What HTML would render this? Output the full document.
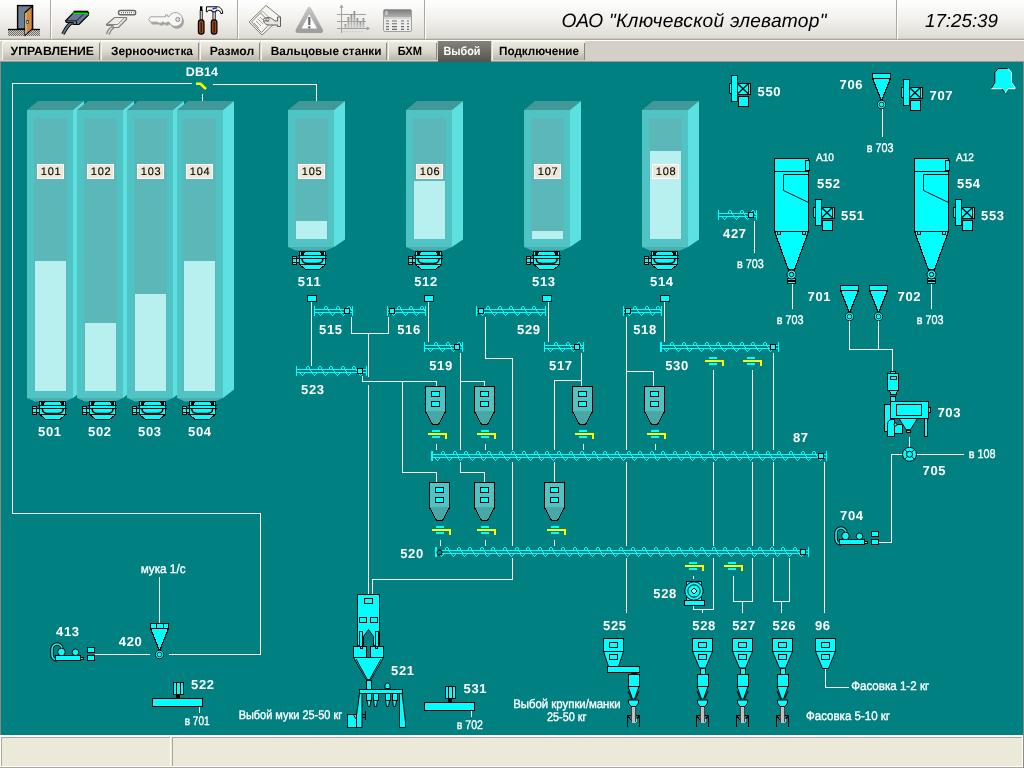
<!DOCTYPE html>
<html lang="ru"><head><meta charset="utf-8"><title>ОАО "Ключевской элеватор" - Выбой</title>
<style>
html,body{margin:0;padding:0;background:#008080;overflow:hidden}
body{width:1024px;height:768px;font-family:"Liberation Sans",sans-serif}
svg{display:block;position:absolute;left:0;top:0;will-change:transform}
text{font-family:"Liberation Sans",sans-serif;white-space:pre}
.b{fill:#fff;font-weight:bold}
.r{fill:#fff;stroke:#fff;stroke-width:.35px}
.k{fill:#000;stroke:#000;stroke-width:.12px}
</style></head><body>
<svg width="1024" height="768" viewBox="0 0 1024 768" shape-rendering="crispEdges" text-rendering="geometricPrecision">
<defs>
<linearGradient id="tbg" x1="0" y1="0" x2="0" y2="1"><stop offset="0" stop-color="#FFFFFF"/><stop offset=".5" stop-color="#F1F0EC"/><stop offset="1" stop-color="#DBD9D1"/></linearGradient>
<linearGradient id="tab" x1="0" y1="0" x2="0" y2="1"><stop offset="0" stop-color="#EEEDE3"/><stop offset=".55" stop-color="#DAD8CC"/><stop offset="1" stop-color="#B9B7AB"/></linearGradient>
<linearGradient id="tsel" x1="0" y1="0" x2="0" y2="1"><stop offset="0" stop-color="#84847C"/><stop offset="1" stop-color="#55554F"/></linearGradient>
<pattern id="dith" width="2" height="2" patternUnits="userSpaceOnUse"><rect width="2" height="2" fill="#C8C8C8"/><rect width="1" height="1" fill="#707070"/><rect x="1" y="1" width="1" height="1" fill="#707070"/></pattern>
<g id="fl" fill="#00FFFF"><rect x="0" y="6" width="1" height="2"/><rect x="1" y="8" width="1" height="1"/><rect x="2" y="9" width="1" height="1"/><rect x="3" y="8" width="1" height="1"/><rect x="4" y="7" width="1" height="1"/><rect x="6" y="1" width="1" height="2"/><rect x="7" y="0" width="2" height="1"/><rect x="9" y="1" width="1" height="2"/><rect x="10" y="3" width="1" height="2"/><rect x="11" y="5" width="1" height="1"/></g><g id="flh" fill="#00FFFF"><rect x="0" y="6" width="1" height="2"/><rect x="1" y="8" width="1" height="1"/><rect x="2" y="9" width="1" height="1"/><rect x="3" y="8" width="1" height="1"/><rect x="4" y="7" width="1" height="1"/></g>
<linearGradient id="wg" x1="0" y1="0" x2="0" y2="1"><stop offset="0" stop-color="#C4C4C4"/><stop offset="1" stop-color="#9E9E9E"/></linearGradient>
<linearGradient id="bg" x1="0" y1="0" x2="0" y2="1"><stop offset="0" stop-color="#8C8C8C"/><stop offset="1" stop-color="#C8C8C8"/></linearGradient>
<linearGradient id="hg" x1="0" y1="0" x2="0" y2="1"><stop offset="0" stop-color="#7E7E7E"/><stop offset="1" stop-color="#B4B4B4"/></linearGradient>
</defs>
<rect x="0" y="0" width="1024" height="768" fill="#008080"/>
<rect x="12" y="83" width="180" height="1" fill="#fff"/>
<rect x="213" y="84" width="104" height="1" fill="#fff"/>
<rect x="316" y="84" width="1" height="17" fill="#fff"/>
<rect x="12" y="83" width="1" height="431" fill="#fff"/>
<rect x="12" y="513" width="249" height="1" fill="#fff"/>
<rect x="260" y="513" width="1" height="142" fill="#fff"/>
<rect x="169" y="654" width="92" height="1" fill="#fff"/>
<rect x="95" y="654" width="55" height="1" fill="#fff"/>
<rect x="202" y="94" width="1" height="7" fill="#fff"/>
<path d="M196,83.7 h4.500 l5.500,5.300" fill="none" stroke="#FFFF00" stroke-width="2.600" shape-rendering="auto"/>
<rect x="159" y="577" width="1" height="46" fill="#fff"/>
<rect x="311" y="302" width="1" height="64" fill="#fff"/>
<rect x="428" y="302" width="1" height="40" fill="#fff"/>
<rect x="548" y="302" width="1" height="40" fill="#fff"/>
<rect x="664" y="302" width="1" height="40" fill="#fff"/>
<rect x="351" y="317" width="1" height="17" fill="#fff"/>
<rect x="388" y="317" width="1" height="17" fill="#fff"/>
<rect x="351" y="333" width="38" height="1" fill="#fff"/>
<rect x="368" y="333" width="1" height="44" fill="#fff"/>
<rect x="368" y="385" width="1" height="209" fill="#fff"/>
<rect x="362" y="376" width="1" height="6" fill="#fff"/>
<rect x="362" y="381" width="75" height="1" fill="#fff"/>
<rect x="436" y="381" width="1" height="6" fill="#fff"/>
<rect x="402" y="381" width="1" height="92" fill="#fff"/>
<rect x="402" y="472" width="35" height="1" fill="#fff"/>
<rect x="436" y="472" width="1" height="11" fill="#fff"/>
<rect x="460" y="353" width="1" height="97" fill="#fff"/>
<rect x="460" y="462" width="1" height="11" fill="#fff"/>
<rect x="460" y="381" width="25" height="1" fill="#fff"/>
<rect x="484" y="381" width="1" height="6" fill="#fff"/>
<rect x="460" y="472" width="25" height="1" fill="#fff"/>
<rect x="484" y="472" width="1" height="11" fill="#fff"/>
<rect x="485" y="317" width="1" height="42" fill="#fff"/>
<rect x="485" y="358" width="28" height="1" fill="#fff"/>
<rect x="512" y="358" width="1" height="92" fill="#fff"/>
<rect x="512" y="462" width="1" height="84" fill="#fff"/>
<rect x="512" y="558" width="1" height="22" fill="#fff"/>
<rect x="372" y="579" width="141" height="1" fill="#fff"/>
<rect x="372" y="579" width="1" height="15" fill="#fff"/>
<rect x="581" y="353" width="1" height="34" fill="#fff"/>
<rect x="554" y="380" width="28" height="1" fill="#fff"/>
<rect x="554" y="380" width="1" height="70" fill="#fff"/>
<rect x="554" y="462" width="1" height="21" fill="#fff"/>
<rect x="626" y="317" width="1" height="133" fill="#fff"/>
<rect x="626" y="462" width="1" height="84" fill="#fff"/>
<rect x="626" y="558" width="1" height="55" fill="#fff"/>
<rect x="626" y="371" width="28" height="1" fill="#fff"/>
<rect x="653" y="371" width="1" height="16" fill="#fff"/>
<rect x="713" y="370" width="1" height="80" fill="#fff"/>
<rect x="713" y="462" width="1" height="84" fill="#fff"/>
<rect x="713" y="558" width="1" height="52" fill="#fff"/>
<rect x="752" y="370" width="1" height="80" fill="#fff"/>
<rect x="752" y="462" width="1" height="84" fill="#fff"/>
<rect x="752" y="558" width="1" height="44" fill="#fff"/>
<rect x="773" y="353" width="1" height="97" fill="#fff"/>
<rect x="773" y="462" width="1" height="84" fill="#fff"/>
<rect x="773" y="558" width="1" height="44" fill="#fff"/>
<rect x="824" y="462" width="1" height="151" fill="#fff"/>
<rect x="789" y="558" width="1" height="44" fill="#fff"/>
<rect x="773" y="601" width="17" height="1" fill="#fff"/>
<rect x="781" y="601" width="1" height="12" fill="#fff"/>
<rect x="733" y="576" width="1" height="26" fill="#fff"/>
<rect x="733" y="601" width="20" height="1" fill="#fff"/>
<rect x="742" y="601" width="1" height="12" fill="#fff"/>
<rect x="693" y="576" width="1" height="3" fill="#fff"/>
<rect x="693" y="605" width="1" height="5" fill="#fff"/>
<rect x="693" y="609" width="21" height="1" fill="#fff"/>
<rect x="702" y="609" width="1" height="4" fill="#fff"/>
<rect x="436" y="444" width="1" height="6" fill="#fff"/>
<rect x="485" y="444" width="1" height="6" fill="#fff"/>
<rect x="583" y="444" width="1" height="6" fill="#fff"/>
<rect x="655" y="444" width="1" height="6" fill="#fff"/>
<rect x="440" y="540" width="1" height="6" fill="#fff"/>
<rect x="485" y="540" width="1" height="6" fill="#fff"/>
<rect x="554" y="540" width="1" height="6" fill="#fff"/>
<rect x="754" y="221" width="1" height="32" fill="#fff"/>
<rect x="882" y="108" width="1" height="29" fill="#fff"/>
<rect x="792" y="284" width="1" height="25" fill="#fff"/>
<rect x="931" y="284" width="1" height="25" fill="#fff"/>
<rect x="849" y="320" width="1" height="30" fill="#fff"/>
<rect x="878" y="320" width="1" height="30" fill="#fff"/>
<rect x="849" y="349" width="44" height="1" fill="#fff"/>
<rect x="892" y="349" width="1" height="23" fill="#fff"/>
<rect x="909" y="437" width="1" height="10" fill="#fff"/>
<rect x="916" y="454" width="48" height="1" fill="#fff"/>
<rect x="891" y="454" width="12" height="1" fill="#fff"/>
<rect x="891" y="454" width="1" height="89" fill="#fff"/>
<rect x="879" y="542" width="13" height="1" fill="#fff"/>
<rect x="199" y="707" width="1" height="6" fill="#fff"/>
<rect x="471" y="711" width="1" height="6" fill="#fff"/>
<rect x="825" y="668" width="1" height="20" fill="#fff"/>
<rect x="825" y="687" width="24" height="1" fill="#fff"/>
<polygon points="27,110 38,101 84,101 73,110" fill="#409898" shape-rendering="auto"/>
<polygon points="73,110 84,101 84,389.4 73,398" fill="#5CE0E0" shape-rendering="auto"/>
<rect x="27" y="110" width="46" height="288" fill="#50C4C4"/>
<polygon points="27,398 73,398 65,401.4 35,401.4" fill="#48B0B0" shape-rendering="auto"/>
<rect x="34" y="118" width="33" height="273" fill="#5CB8B8"/>
<rect x="35" y="261" width="31" height="130" fill="#B8F0F0"/>
<rect x="37" y="164" width="27" height="15" fill="#fff"/>
<rect x="38" y="165" width="25" height="13" fill="#ECE9D8"/>
<text x="50.7" y="175.4" class="k" font-size="11" text-anchor="middle" textLength="20" lengthAdjust="spacing">101</text>
<polygon points="77,110 88,101 134,101 123,110" fill="#409898" shape-rendering="auto"/>
<polygon points="123,110 134,101 134,389.4 123,398" fill="#5CE0E0" shape-rendering="auto"/>
<rect x="77" y="110" width="46" height="288" fill="#50C4C4"/>
<polygon points="77,398 123,398 115,401.4 85,401.4" fill="#48B0B0" shape-rendering="auto"/>
<rect x="84" y="118" width="33" height="273" fill="#5CB8B8"/>
<rect x="85" y="323" width="31" height="68" fill="#B8F0F0"/>
<rect x="87" y="164" width="27" height="15" fill="#fff"/>
<rect x="88" y="165" width="25" height="13" fill="#ECE9D8"/>
<text x="100.7" y="175.4" class="k" font-size="11" text-anchor="middle" textLength="20" lengthAdjust="spacing">102</text>
<polygon points="127,110 138,101 184,101 173,110" fill="#409898" shape-rendering="auto"/>
<polygon points="173,110 184,101 184,389.4 173,398" fill="#5CE0E0" shape-rendering="auto"/>
<rect x="127" y="110" width="46" height="288" fill="#50C4C4"/>
<polygon points="127,398 173,398 165,401.4 135,401.4" fill="#48B0B0" shape-rendering="auto"/>
<rect x="134" y="118" width="33" height="273" fill="#5CB8B8"/>
<rect x="135" y="294" width="31" height="97" fill="#B8F0F0"/>
<rect x="137" y="164" width="27" height="15" fill="#fff"/>
<rect x="138" y="165" width="25" height="13" fill="#ECE9D8"/>
<text x="150.7" y="175.4" class="k" font-size="11" text-anchor="middle" textLength="20" lengthAdjust="spacing">103</text>
<polygon points="177,110 188,101 234,101 223,110" fill="#409898" shape-rendering="auto"/>
<polygon points="223,110 234,101 234,389.4 223,398" fill="#5CE0E0" shape-rendering="auto"/>
<rect x="177" y="110" width="46" height="288" fill="#50C4C4"/>
<polygon points="177,398 223,398 215,401.4 185,401.4" fill="#48B0B0" shape-rendering="auto"/>
<rect x="183" y="118" width="33" height="273" fill="#5CB8B8"/>
<rect x="184" y="261" width="31" height="130" fill="#B8F0F0"/>
<rect x="186" y="164" width="27" height="15" fill="#fff"/>
<rect x="187" y="165" width="25" height="13" fill="#ECE9D8"/>
<text x="199.7" y="175.4" class="k" font-size="11" text-anchor="middle" textLength="20" lengthAdjust="spacing">104</text>
<polygon points="288,110 299,101 345,101 334,110" fill="#409898" shape-rendering="auto"/>
<polygon points="334,110 345,101 345,239.5 334,247" fill="#5CE0E0" shape-rendering="auto"/>
<rect x="288" y="110" width="46" height="137" fill="#50C4C4"/>
<polygon points="288,247 334,247 326,250.4 296,250.4" fill="#48B0B0" shape-rendering="auto"/>
<rect x="295" y="118" width="33" height="121" fill="#5CB8B8"/>
<rect x="296" y="221" width="31" height="18" fill="#B8F0F0"/>
<rect x="298" y="164" width="27" height="15" fill="#fff"/>
<rect x="299" y="165" width="25" height="13" fill="#ECE9D8"/>
<text x="311.7" y="175.4" class="k" font-size="11" text-anchor="middle" textLength="20" lengthAdjust="spacing">105</text>
<polygon points="406,110 417,101 463,101 452,110" fill="#409898" shape-rendering="auto"/>
<polygon points="452,110 463,101 463,239.5 452,247" fill="#5CE0E0" shape-rendering="auto"/>
<rect x="406" y="110" width="46" height="137" fill="#50C4C4"/>
<polygon points="406,247 452,247 444,250.4 414,250.4" fill="#48B0B0" shape-rendering="auto"/>
<rect x="413" y="118" width="33" height="121" fill="#5CB8B8"/>
<rect x="414" y="181" width="31" height="58" fill="#B8F0F0"/>
<rect x="416" y="164" width="27" height="15" fill="#fff"/>
<rect x="417" y="165" width="25" height="13" fill="#ECE9D8"/>
<text x="429.7" y="175.4" class="k" font-size="11" text-anchor="middle" textLength="20" lengthAdjust="spacing">106</text>
<polygon points="524,110 535,101 581,101 570,110" fill="#409898" shape-rendering="auto"/>
<polygon points="570,110 581,101 581,239.5 570,247" fill="#5CE0E0" shape-rendering="auto"/>
<rect x="524" y="110" width="46" height="137" fill="#50C4C4"/>
<polygon points="524,247 570,247 562,250.4 532,250.4" fill="#48B0B0" shape-rendering="auto"/>
<rect x="531" y="118" width="33" height="121" fill="#5CB8B8"/>
<rect x="532" y="231" width="31" height="8" fill="#B8F0F0"/>
<rect x="534" y="164" width="27" height="15" fill="#fff"/>
<rect x="535" y="165" width="25" height="13" fill="#ECE9D8"/>
<text x="547.7" y="175.4" class="k" font-size="11" text-anchor="middle" textLength="20" lengthAdjust="spacing">107</text>
<polygon points="642,110 653,101 699,101 688,110" fill="#409898" shape-rendering="auto"/>
<polygon points="688,110 699,101 699,239.5 688,247" fill="#5CE0E0" shape-rendering="auto"/>
<rect x="642" y="110" width="46" height="137" fill="#50C4C4"/>
<polygon points="642,247 688,247 680,250.4 650,250.4" fill="#48B0B0" shape-rendering="auto"/>
<rect x="649" y="118" width="33" height="121" fill="#5CB8B8"/>
<rect x="650" y="151" width="31" height="88" fill="#B8F0F0"/>
<rect x="652" y="164" width="27" height="15" fill="#fff"/>
<rect x="653" y="165" width="25" height="13" fill="#ECE9D8"/>
<text x="665.7" y="175.4" class="k" font-size="11" text-anchor="middle" textLength="20" lengthAdjust="spacing">108</text>
<polygon points="39.8,414.5 65.8,414.5 59.8,419.5 45.8,419.5" fill="#00FFFF" stroke="#000" stroke-width="1" />
<rect x="39.3" y="401" width="27" height="14" fill="#000"/>
<rect x="40.3" y="402" width="25" height="12" fill="#00FFFF"/>
<rect x="41.3" y="402" width="3" height="3" fill="#000"/>
<rect x="61.3" y="402" width="3" height="3" fill="#000"/>
<rect x="44.3" y="402" width="1" height="1" fill="#000"/>
<rect x="60.3" y="402" width="1" height="1" fill="#000"/>
<rect x="38.3" y="405" width="29" height="1" fill="#000"/>
<rect x="38.3" y="408" width="29" height="1" fill="#000"/>
<path d="M42.3,409 c.3,3 2.300,4.500 5.500,4.500 h10 c3.200,0 5.200,-1.500 5.500,-4.500" fill="none" stroke="#000" stroke-width="1.500" shape-rendering="auto"/>
<rect x="42.3" y="411" width="1" height="1" fill="#000"/>
<rect x="62.3" y="411" width="1" height="1" fill="#000"/>
<rect x="36.3" y="408" width="4" height="5" fill="#000"/>
<rect x="37.3" y="409" width="2" height="3" fill="#00FFFF"/>
<rect x="32.3" y="406" width="5" height="9" fill="#000"/>
<rect x="33.3" y="407" width="3" height="7" fill="#00FFFF"/>
<rect x="33.3" y="408" width="3" height="1" fill="#000"/>
<rect x="33.3" y="412" width="3" height="1" fill="#000"/>
<polygon points="89.6,414.5 115.6,414.5 109.6,419.5 95.6,419.5" fill="#00FFFF" stroke="#000" stroke-width="1" />
<rect x="89.1" y="401" width="27" height="14" fill="#000"/>
<rect x="90.1" y="402" width="25" height="12" fill="#00FFFF"/>
<rect x="91.1" y="402" width="3" height="3" fill="#000"/>
<rect x="111.1" y="402" width="3" height="3" fill="#000"/>
<rect x="94.1" y="402" width="1" height="1" fill="#000"/>
<rect x="110.1" y="402" width="1" height="1" fill="#000"/>
<rect x="88.1" y="405" width="29" height="1" fill="#000"/>
<rect x="88.1" y="408" width="29" height="1" fill="#000"/>
<path d="M92.1,409 c.3,3 2.300,4.500 5.500,4.500 h10 c3.200,0 5.200,-1.500 5.500,-4.500" fill="none" stroke="#000" stroke-width="1.500" shape-rendering="auto"/>
<rect x="92.1" y="411" width="1" height="1" fill="#000"/>
<rect x="112.1" y="411" width="1" height="1" fill="#000"/>
<rect x="86.1" y="408" width="4" height="5" fill="#000"/>
<rect x="87.1" y="409" width="2" height="3" fill="#00FFFF"/>
<rect x="82.1" y="406" width="5" height="9" fill="#000"/>
<rect x="83.1" y="407" width="3" height="7" fill="#00FFFF"/>
<rect x="83.1" y="408" width="3" height="1" fill="#000"/>
<rect x="83.1" y="412" width="3" height="1" fill="#000"/>
<polygon points="139.4,414.5 165.4,414.5 159.4,419.5 145.4,419.5" fill="#00FFFF" stroke="#000" stroke-width="1" />
<rect x="138.9" y="401" width="27" height="14" fill="#000"/>
<rect x="139.9" y="402" width="25" height="12" fill="#00FFFF"/>
<rect x="140.9" y="402" width="3" height="3" fill="#000"/>
<rect x="160.9" y="402" width="3" height="3" fill="#000"/>
<rect x="143.9" y="402" width="1" height="1" fill="#000"/>
<rect x="159.9" y="402" width="1" height="1" fill="#000"/>
<rect x="137.9" y="405" width="29" height="1" fill="#000"/>
<rect x="137.9" y="408" width="29" height="1" fill="#000"/>
<path d="M141.9,409 c.3,3 2.300,4.500 5.500,4.500 h10 c3.200,0 5.200,-1.500 5.500,-4.500" fill="none" stroke="#000" stroke-width="1.500" shape-rendering="auto"/>
<rect x="141.9" y="411" width="1" height="1" fill="#000"/>
<rect x="161.9" y="411" width="1" height="1" fill="#000"/>
<rect x="135.9" y="408" width="4" height="5" fill="#000"/>
<rect x="136.9" y="409" width="2" height="3" fill="#00FFFF"/>
<rect x="131.9" y="406" width="5" height="9" fill="#000"/>
<rect x="132.9" y="407" width="3" height="7" fill="#00FFFF"/>
<rect x="132.9" y="408" width="3" height="1" fill="#000"/>
<rect x="132.9" y="412" width="3" height="1" fill="#000"/>
<polygon points="189.2,414.5 215.2,414.5 209.2,419.5 195.2,419.5" fill="#00FFFF" stroke="#000" stroke-width="1" />
<rect x="188.7" y="401" width="27" height="14" fill="#000"/>
<rect x="189.7" y="402" width="25" height="12" fill="#00FFFF"/>
<rect x="190.7" y="402" width="3" height="3" fill="#000"/>
<rect x="210.7" y="402" width="3" height="3" fill="#000"/>
<rect x="193.7" y="402" width="1" height="1" fill="#000"/>
<rect x="209.7" y="402" width="1" height="1" fill="#000"/>
<rect x="187.7" y="405" width="29" height="1" fill="#000"/>
<rect x="187.7" y="408" width="29" height="1" fill="#000"/>
<path d="M191.7,409 c.3,3 2.300,4.500 5.500,4.500 h10 c3.200,0 5.200,-1.500 5.500,-4.500" fill="none" stroke="#000" stroke-width="1.500" shape-rendering="auto"/>
<rect x="191.7" y="411" width="1" height="1" fill="#000"/>
<rect x="211.7" y="411" width="1" height="1" fill="#000"/>
<rect x="185.7" y="408" width="4" height="5" fill="#000"/>
<rect x="186.7" y="409" width="2" height="3" fill="#00FFFF"/>
<rect x="181.7" y="406" width="5" height="9" fill="#000"/>
<rect x="182.7" y="407" width="3" height="7" fill="#00FFFF"/>
<rect x="182.7" y="408" width="3" height="1" fill="#000"/>
<rect x="182.7" y="412" width="3" height="1" fill="#000"/>
<polygon points="299.5,264.5 325.5,264.5 319.5,269.5 305.5,269.5" fill="#00FFFF" stroke="#000" stroke-width="1" />
<rect x="299" y="251" width="27" height="14" fill="#000"/>
<rect x="300" y="252" width="25" height="12" fill="#00FFFF"/>
<rect x="301" y="252" width="3" height="3" fill="#000"/>
<rect x="321" y="252" width="3" height="3" fill="#000"/>
<rect x="304" y="252" width="1" height="1" fill="#000"/>
<rect x="320" y="252" width="1" height="1" fill="#000"/>
<rect x="298" y="255" width="29" height="1" fill="#000"/>
<rect x="298" y="258" width="29" height="1" fill="#000"/>
<path d="M302,259 c.3,3 2.300,4.500 5.500,4.500 h10 c3.200,0 5.200,-1.500 5.500,-4.500" fill="none" stroke="#000" stroke-width="1.500" shape-rendering="auto"/>
<rect x="302" y="261" width="1" height="1" fill="#000"/>
<rect x="322" y="261" width="1" height="1" fill="#000"/>
<rect x="296" y="258" width="4" height="5" fill="#000"/>
<rect x="297" y="259" width="2" height="3" fill="#00FFFF"/>
<rect x="292" y="256" width="5" height="9" fill="#000"/>
<rect x="293" y="257" width="3" height="7" fill="#00FFFF"/>
<rect x="293" y="258" width="3" height="1" fill="#000"/>
<rect x="293" y="262" width="3" height="1" fill="#000"/>
<polygon points="415.5,264.5 441.5,264.5 435.5,269.5 421.5,269.5" fill="#00FFFF" stroke="#000" stroke-width="1" />
<rect x="415" y="251" width="27" height="14" fill="#000"/>
<rect x="416" y="252" width="25" height="12" fill="#00FFFF"/>
<rect x="417" y="252" width="3" height="3" fill="#000"/>
<rect x="437" y="252" width="3" height="3" fill="#000"/>
<rect x="420" y="252" width="1" height="1" fill="#000"/>
<rect x="436" y="252" width="1" height="1" fill="#000"/>
<rect x="414" y="255" width="29" height="1" fill="#000"/>
<rect x="414" y="258" width="29" height="1" fill="#000"/>
<path d="M418,259 c.3,3 2.300,4.500 5.500,4.500 h10 c3.200,0 5.200,-1.500 5.500,-4.500" fill="none" stroke="#000" stroke-width="1.500" shape-rendering="auto"/>
<rect x="418" y="261" width="1" height="1" fill="#000"/>
<rect x="438" y="261" width="1" height="1" fill="#000"/>
<rect x="412" y="258" width="4" height="5" fill="#000"/>
<rect x="413" y="259" width="2" height="3" fill="#00FFFF"/>
<rect x="408" y="256" width="5" height="9" fill="#000"/>
<rect x="409" y="257" width="3" height="7" fill="#00FFFF"/>
<rect x="409" y="258" width="3" height="1" fill="#000"/>
<rect x="409" y="262" width="3" height="1" fill="#000"/>
<polygon points="533.7,264.5 559.7,264.5 553.7,269.5 539.7,269.5" fill="#00FFFF" stroke="#000" stroke-width="1" />
<rect x="533.2" y="251" width="27" height="14" fill="#000"/>
<rect x="534.2" y="252" width="25" height="12" fill="#00FFFF"/>
<rect x="535.2" y="252" width="3" height="3" fill="#000"/>
<rect x="555.2" y="252" width="3" height="3" fill="#000"/>
<rect x="538.2" y="252" width="1" height="1" fill="#000"/>
<rect x="554.2" y="252" width="1" height="1" fill="#000"/>
<rect x="532.2" y="255" width="29" height="1" fill="#000"/>
<rect x="532.2" y="258" width="29" height="1" fill="#000"/>
<path d="M536.2,259 c.3,3 2.300,4.500 5.500,4.500 h10 c3.200,0 5.200,-1.500 5.500,-4.500" fill="none" stroke="#000" stroke-width="1.500" shape-rendering="auto"/>
<rect x="536.2" y="261" width="1" height="1" fill="#000"/>
<rect x="556.2" y="261" width="1" height="1" fill="#000"/>
<rect x="530.2" y="258" width="4" height="5" fill="#000"/>
<rect x="531.2" y="259" width="2" height="3" fill="#00FFFF"/>
<rect x="526.2" y="256" width="5" height="9" fill="#000"/>
<rect x="527.2" y="257" width="3" height="7" fill="#00FFFF"/>
<rect x="527.2" y="258" width="3" height="1" fill="#000"/>
<rect x="527.2" y="262" width="3" height="1" fill="#000"/>
<polygon points="651.5,264.5 677.5,264.5 671.5,269.5 657.5,269.5" fill="#00FFFF" stroke="#000" stroke-width="1" />
<rect x="651" y="251" width="27" height="14" fill="#000"/>
<rect x="652" y="252" width="25" height="12" fill="#00FFFF"/>
<rect x="653" y="252" width="3" height="3" fill="#000"/>
<rect x="673" y="252" width="3" height="3" fill="#000"/>
<rect x="656" y="252" width="1" height="1" fill="#000"/>
<rect x="672" y="252" width="1" height="1" fill="#000"/>
<rect x="650" y="255" width="29" height="1" fill="#000"/>
<rect x="650" y="258" width="29" height="1" fill="#000"/>
<path d="M654,259 c.3,3 2.300,4.500 5.500,4.500 h10 c3.200,0 5.200,-1.500 5.500,-4.500" fill="none" stroke="#000" stroke-width="1.500" shape-rendering="auto"/>
<rect x="654" y="261" width="1" height="1" fill="#000"/>
<rect x="674" y="261" width="1" height="1" fill="#000"/>
<rect x="648" y="258" width="4" height="5" fill="#000"/>
<rect x="649" y="259" width="2" height="3" fill="#00FFFF"/>
<rect x="644" y="256" width="5" height="9" fill="#000"/>
<rect x="645" y="257" width="3" height="7" fill="#00FFFF"/>
<rect x="645" y="258" width="3" height="1" fill="#000"/>
<rect x="645" y="262" width="3" height="1" fill="#000"/>
<rect x="307" y="295" width="10" height="7" fill="#000"/>
<rect x="308" y="296" width="8" height="5" fill="#00FFFF"/>
<rect x="424" y="295" width="10" height="7" fill="#000"/>
<rect x="425" y="296" width="8" height="5" fill="#00FFFF"/>
<rect x="542" y="295" width="10" height="7" fill="#000"/>
<rect x="543" y="296" width="8" height="5" fill="#00FFFF"/>
<rect x="659.5" y="295" width="10" height="7" fill="#000"/>
<rect x="660.5" y="296" width="8" height="5" fill="#00FFFF"/>
<rect x="314" y="306" width="1" height="10" fill="#00FFFF"/>
<rect x="352" y="306" width="1" height="10" fill="#00FFFF"/>
<rect x="315" y="309" width="37" height="1" fill="#00FFFF"/>
<rect x="315" y="312" width="37" height="1" fill="#00FFFF"/>
<use href="#fl" x="318" y="306"/>
<use href="#fl" x="330" y="306"/>
<use href="#fl" x="341" y="306"/>
<rect x="344" y="308" width="6" height="6" fill="#000"/>
<rect x="345" y="309" width="4" height="4" fill="#00FFFF"/>
<rect x="387" y="306" width="1" height="10" fill="#00FFFF"/>
<rect x="425" y="306" width="1" height="10" fill="#00FFFF"/>
<rect x="388" y="309" width="37" height="1" fill="#00FFFF"/>
<rect x="388" y="312" width="37" height="1" fill="#00FFFF"/>
<use href="#fl" x="391" y="306"/>
<use href="#fl" x="403" y="306"/>
<use href="#fl" x="414" y="306"/>
<rect x="389" y="308" width="6" height="6" fill="#000"/>
<rect x="390" y="309" width="4" height="4" fill="#00FFFF"/>
<rect x="476" y="306" width="1" height="10" fill="#00FFFF"/>
<rect x="545" y="306" width="1" height="10" fill="#00FFFF"/>
<rect x="477" y="309" width="68" height="1" fill="#00FFFF"/>
<rect x="477" y="312" width="68" height="1" fill="#00FFFF"/>
<use href="#fl" x="480" y="306"/>
<use href="#fl" x="492" y="306"/>
<use href="#fl" x="503" y="306"/>
<use href="#fl" x="515" y="306"/>
<use href="#fl" x="526" y="306"/>
<use href="#flh" x="538" y="306"/>
<rect x="478" y="308" width="6" height="6" fill="#000"/>
<rect x="479" y="309" width="4" height="4" fill="#00FFFF"/>
<rect x="623" y="306" width="1" height="10" fill="#00FFFF"/>
<rect x="661" y="306" width="1" height="10" fill="#00FFFF"/>
<rect x="624" y="309" width="37" height="1" fill="#00FFFF"/>
<rect x="624" y="312" width="37" height="1" fill="#00FFFF"/>
<use href="#fl" x="627" y="306"/>
<use href="#fl" x="639" y="306"/>
<use href="#fl" x="650" y="306"/>
<rect x="625" y="308" width="6" height="6" fill="#000"/>
<rect x="626" y="309" width="4" height="4" fill="#00FFFF"/>
<rect x="424" y="342" width="1" height="10" fill="#00FFFF"/>
<rect x="462" y="342" width="1" height="10" fill="#00FFFF"/>
<rect x="425" y="345" width="37" height="1" fill="#00FFFF"/>
<rect x="425" y="348" width="37" height="1" fill="#00FFFF"/>
<use href="#fl" x="428" y="342"/>
<use href="#fl" x="440" y="342"/>
<use href="#fl" x="451" y="342"/>
<rect x="454" y="344" width="6" height="6" fill="#000"/>
<rect x="455" y="345" width="4" height="4" fill="#00FFFF"/>
<rect x="544" y="342" width="1" height="10" fill="#00FFFF"/>
<rect x="583" y="342" width="1" height="10" fill="#00FFFF"/>
<rect x="545" y="345" width="38" height="1" fill="#00FFFF"/>
<rect x="545" y="348" width="38" height="1" fill="#00FFFF"/>
<use href="#fl" x="548" y="342"/>
<use href="#fl" x="560" y="342"/>
<use href="#fl" x="571" y="342"/>
<rect x="574" y="344" width="6" height="6" fill="#000"/>
<rect x="575" y="345" width="4" height="4" fill="#00FFFF"/>
<rect x="660" y="342" width="2" height="10" fill="#00FFFF"/>
<rect x="778" y="342" width="1" height="10" fill="#00FFFF"/>
<rect x="661" y="345" width="117" height="1" fill="#00FFFF"/>
<rect x="661" y="348" width="117" height="1" fill="#00FFFF"/>
<use href="#fl" x="664" y="342"/>
<use href="#fl" x="676" y="342"/>
<use href="#fl" x="687" y="342"/>
<use href="#fl" x="699" y="342"/>
<use href="#fl" x="710" y="342"/>
<use href="#fl" x="722" y="342"/>
<use href="#fl" x="734" y="342"/>
<use href="#fl" x="745" y="342"/>
<use href="#fl" x="757" y="342"/>
<use href="#flh" x="768" y="342"/>
<rect x="770" y="344" width="6" height="6" fill="#000"/>
<rect x="771" y="345" width="4" height="4" fill="#00FFFF"/>
<rect x="296" y="366" width="1" height="10" fill="#00FFFF"/>
<rect x="366" y="366" width="1" height="10" fill="#00FFFF"/>
<rect x="297" y="369" width="69" height="1" fill="#00FFFF"/>
<rect x="297" y="372" width="69" height="1" fill="#00FFFF"/>
<use href="#fl" x="300" y="366"/>
<use href="#fl" x="312" y="366"/>
<use href="#fl" x="323" y="366"/>
<use href="#fl" x="335" y="366"/>
<use href="#fl" x="346" y="366"/>
<use href="#flh" x="358" y="366"/>
<rect x="357" y="368" width="6" height="6" fill="#000"/>
<rect x="358" y="369" width="4" height="4" fill="#00FFFF"/>
<rect x="431" y="451" width="2" height="10" fill="#00FFFF"/>
<rect x="826" y="451" width="1" height="10" fill="#00FFFF"/>
<rect x="432" y="454" width="394" height="1" fill="#00FFFF"/>
<rect x="432" y="457" width="394" height="1" fill="#00FFFF"/>
<use href="#fl" x="435" y="451"/>
<use href="#fl" x="447" y="451"/>
<use href="#fl" x="458" y="451"/>
<use href="#fl" x="470" y="451"/>
<use href="#fl" x="481" y="451"/>
<use href="#fl" x="493" y="451"/>
<use href="#fl" x="505" y="451"/>
<use href="#fl" x="516" y="451"/>
<use href="#fl" x="528" y="451"/>
<use href="#fl" x="539" y="451"/>
<use href="#fl" x="551" y="451"/>
<use href="#fl" x="563" y="451"/>
<use href="#fl" x="574" y="451"/>
<use href="#fl" x="586" y="451"/>
<use href="#fl" x="597" y="451"/>
<use href="#fl" x="609" y="451"/>
<use href="#fl" x="621" y="451"/>
<use href="#fl" x="632" y="451"/>
<use href="#fl" x="644" y="451"/>
<use href="#fl" x="655" y="451"/>
<use href="#fl" x="667" y="451"/>
<use href="#fl" x="679" y="451"/>
<use href="#fl" x="690" y="451"/>
<use href="#fl" x="702" y="451"/>
<use href="#fl" x="713" y="451"/>
<use href="#fl" x="725" y="451"/>
<use href="#fl" x="737" y="451"/>
<use href="#fl" x="748" y="451"/>
<use href="#fl" x="760" y="451"/>
<use href="#fl" x="771" y="451"/>
<use href="#fl" x="783" y="451"/>
<use href="#fl" x="795" y="451"/>
<use href="#fl" x="806" y="451"/>
<use href="#flh" x="818" y="451"/>
<rect x="818" y="453" width="6" height="6" fill="#000"/>
<rect x="819" y="454" width="4" height="4" fill="#00FFFF"/>
<rect x="435" y="547" width="2" height="10" fill="#00FFFF"/>
<rect x="808" y="547" width="1" height="10" fill="#00FFFF"/>
<rect x="436" y="550" width="372" height="1" fill="#00FFFF"/>
<rect x="436" y="553" width="372" height="1" fill="#00FFFF"/>
<use href="#fl" x="439" y="547"/>
<use href="#fl" x="451" y="547"/>
<use href="#fl" x="462" y="547"/>
<use href="#fl" x="474" y="547"/>
<use href="#fl" x="485" y="547"/>
<use href="#fl" x="497" y="547"/>
<use href="#fl" x="509" y="547"/>
<use href="#fl" x="520" y="547"/>
<use href="#fl" x="532" y="547"/>
<use href="#fl" x="543" y="547"/>
<use href="#fl" x="555" y="547"/>
<use href="#fl" x="567" y="547"/>
<use href="#fl" x="578" y="547"/>
<use href="#fl" x="590" y="547"/>
<use href="#fl" x="601" y="547"/>
<use href="#fl" x="613" y="547"/>
<use href="#fl" x="625" y="547"/>
<use href="#fl" x="636" y="547"/>
<use href="#fl" x="648" y="547"/>
<use href="#fl" x="659" y="547"/>
<use href="#fl" x="671" y="547"/>
<use href="#fl" x="683" y="547"/>
<use href="#fl" x="694" y="547"/>
<use href="#fl" x="706" y="547"/>
<use href="#fl" x="717" y="547"/>
<use href="#fl" x="729" y="547"/>
<use href="#fl" x="741" y="547"/>
<use href="#fl" x="752" y="547"/>
<use href="#fl" x="764" y="547"/>
<use href="#fl" x="775" y="547"/>
<use href="#fl" x="787" y="547"/>
<use href="#flh" x="799" y="547"/>
<rect x="800" y="549" width="6" height="6" fill="#000"/>
<rect x="801" y="550" width="4" height="4" fill="#00FFFF"/>
<circle cx="439.5" cy="552.5" r="2.5" fill="#008080" stroke="#000" stroke-width="1" shape-rendering="auto"/>
<polygon points="425.5,386.5 445.5,386.5 445.5,411.5 438.5,424.5 432.5,424.5 425.5,411.5" fill="#48A8A8" stroke="#000" stroke-width="1" />
<rect x="426" y="387" width="19" height="24" fill="#50C4C4"/>
<rect x="431" y="391" width="9" height="6" fill="#000"/>
<rect x="432" y="392" width="7" height="4" fill="#00FFFF"/>
<rect x="431" y="401" width="9" height="6" fill="#000"/>
<rect x="432" y="402" width="7" height="4" fill="#00FFFF"/>
<polygon points="474.5,386.5 494.5,386.5 494.5,411.5 487.5,424.5 481.5,424.5 474.5,411.5" fill="#48A8A8" stroke="#000" stroke-width="1" />
<rect x="475" y="387" width="19" height="24" fill="#50C4C4"/>
<rect x="480" y="391" width="9" height="6" fill="#000"/>
<rect x="481" y="392" width="7" height="4" fill="#00FFFF"/>
<rect x="480" y="401" width="9" height="6" fill="#000"/>
<rect x="481" y="402" width="7" height="4" fill="#00FFFF"/>
<polygon points="572.5,386.5 592.5,386.5 592.5,411.5 585.5,424.5 579.5,424.5 572.5,411.5" fill="#48A8A8" stroke="#000" stroke-width="1" />
<rect x="573" y="387" width="19" height="24" fill="#50C4C4"/>
<rect x="578" y="391" width="9" height="6" fill="#000"/>
<rect x="579" y="392" width="7" height="4" fill="#00FFFF"/>
<rect x="578" y="401" width="9" height="6" fill="#000"/>
<rect x="579" y="402" width="7" height="4" fill="#00FFFF"/>
<polygon points="644.5,386.5 664.5,386.5 664.5,411.5 657.5,424.5 651.5,424.5 644.5,411.5" fill="#48A8A8" stroke="#000" stroke-width="1" />
<rect x="645" y="387" width="19" height="24" fill="#50C4C4"/>
<rect x="650" y="391" width="9" height="6" fill="#000"/>
<rect x="651" y="392" width="7" height="4" fill="#00FFFF"/>
<rect x="650" y="401" width="9" height="6" fill="#000"/>
<rect x="651" y="402" width="7" height="4" fill="#00FFFF"/>
<polygon points="429.5,482.5 449.5,482.5 449.5,507.5 442.5,520.5 436.5,520.5 429.5,507.5" fill="#48A8A8" stroke="#000" stroke-width="1" />
<rect x="430" y="483" width="19" height="24" fill="#50C4C4"/>
<rect x="435" y="487" width="9" height="6" fill="#000"/>
<rect x="436" y="488" width="7" height="4" fill="#00FFFF"/>
<rect x="435" y="497" width="9" height="6" fill="#000"/>
<rect x="436" y="498" width="7" height="4" fill="#00FFFF"/>
<polygon points="474.5,482.5 494.5,482.5 494.5,507.5 487.5,520.5 481.5,520.5 474.5,507.5" fill="#48A8A8" stroke="#000" stroke-width="1" />
<rect x="475" y="483" width="19" height="24" fill="#50C4C4"/>
<rect x="480" y="487" width="9" height="6" fill="#000"/>
<rect x="481" y="488" width="7" height="4" fill="#00FFFF"/>
<rect x="480" y="497" width="9" height="6" fill="#000"/>
<rect x="481" y="498" width="7" height="4" fill="#00FFFF"/>
<polygon points="544.5,482.5 564.5,482.5 564.5,507.5 557.5,520.5 551.5,520.5 544.5,507.5" fill="#48A8A8" stroke="#000" stroke-width="1" />
<rect x="545" y="483" width="19" height="24" fill="#50C4C4"/>
<rect x="550" y="487" width="9" height="6" fill="#000"/>
<rect x="551" y="488" width="7" height="4" fill="#00FFFF"/>
<rect x="550" y="497" width="9" height="6" fill="#000"/>
<rect x="551" y="498" width="7" height="4" fill="#00FFFF"/>
<rect x="432" y="430" width="8" height="2" fill="#00FFFF"/>
<rect x="428" y="433" width="19" height="2" fill="#FFFF00"/>
<rect x="445" y="433" width="2" height="6" fill="#FFFF00"/>
<rect x="432" y="436" width="8" height="2" fill="#00FFFF"/>
<rect x="481" y="430" width="8" height="2" fill="#00FFFF"/>
<rect x="477" y="433" width="19" height="2" fill="#FFFF00"/>
<rect x="494" y="433" width="2" height="6" fill="#FFFF00"/>
<rect x="481" y="436" width="8" height="2" fill="#00FFFF"/>
<rect x="579" y="430" width="8" height="2" fill="#00FFFF"/>
<rect x="575" y="433" width="19" height="2" fill="#FFFF00"/>
<rect x="592" y="433" width="2" height="6" fill="#FFFF00"/>
<rect x="579" y="436" width="8" height="2" fill="#00FFFF"/>
<rect x="651" y="430" width="8" height="2" fill="#00FFFF"/>
<rect x="647" y="433" width="19" height="2" fill="#FFFF00"/>
<rect x="664" y="433" width="2" height="6" fill="#FFFF00"/>
<rect x="651" y="436" width="8" height="2" fill="#00FFFF"/>
<rect x="436" y="526" width="8" height="2" fill="#00FFFF"/>
<rect x="432" y="529" width="19" height="2" fill="#FFFF00"/>
<rect x="449" y="529" width="2" height="6" fill="#FFFF00"/>
<rect x="436" y="532" width="8" height="2" fill="#00FFFF"/>
<rect x="481" y="526" width="8" height="2" fill="#00FFFF"/>
<rect x="477" y="529" width="19" height="2" fill="#FFFF00"/>
<rect x="494" y="529" width="2" height="6" fill="#FFFF00"/>
<rect x="481" y="532" width="8" height="2" fill="#00FFFF"/>
<rect x="551" y="526" width="8" height="2" fill="#00FFFF"/>
<rect x="547" y="529" width="19" height="2" fill="#FFFF00"/>
<rect x="564" y="529" width="2" height="6" fill="#FFFF00"/>
<rect x="551" y="532" width="8" height="2" fill="#00FFFF"/>
<rect x="709" y="356.5" width="8" height="2" fill="#00FFFF"/>
<rect x="705" y="359.5" width="19" height="2" fill="#FFFF00"/>
<rect x="722" y="359.5" width="2" height="6" fill="#FFFF00"/>
<rect x="709" y="362.5" width="8" height="2" fill="#00FFFF"/>
<rect x="747" y="356.5" width="8" height="2" fill="#00FFFF"/>
<rect x="743" y="359.5" width="19" height="2" fill="#FFFF00"/>
<rect x="760" y="359.5" width="2" height="6" fill="#FFFF00"/>
<rect x="747" y="362.5" width="8" height="2" fill="#00FFFF"/>
<rect x="689" y="562" width="8" height="2" fill="#00FFFF"/>
<rect x="685" y="565" width="19" height="2" fill="#FFFF00"/>
<rect x="702" y="565" width="2" height="6" fill="#FFFF00"/>
<rect x="689" y="568" width="8" height="2" fill="#00FFFF"/>
<rect x="728" y="562" width="8" height="2" fill="#00FFFF"/>
<rect x="724" y="565" width="19" height="2" fill="#FFFF00"/>
<rect x="741" y="565" width="2" height="6" fill="#FFFF00"/>
<rect x="728" y="568" width="8" height="2" fill="#00FFFF"/>
<rect x="729" y="83" width="3" height="10.5" fill="#000"/>
<rect x="730" y="84" width="1" height="8.5" fill="#00FFFF"/>
<rect x="731" y="75" width="7" height="27" fill="#000"/>
<rect x="732" y="76" width="5" height="25" fill="#00FFFF"/>
<rect x="737" y="83" width="14" height="11.5" fill="#000"/>
<rect x="738" y="84" width="12" height="9.5" fill="#00FFFF"/>
<rect x="748" y="83" width="1" height="11.5" fill="#000"/>
<path d="M738,84 l10,9.5 M748,84 l-10,9.5" stroke="#000" stroke-width="1.300" fill="none" shape-rendering="auto"/>
<rect x="738" y="96" width="11" height="10.5" fill="#000"/>
<rect x="739" y="97" width="9" height="8.5" fill="#00FFFF"/>
<rect x="901" y="87" width="3" height="10.5" fill="#000"/>
<rect x="902" y="88" width="1" height="8.5" fill="#00FFFF"/>
<rect x="903" y="79" width="7" height="27" fill="#000"/>
<rect x="904" y="80" width="5" height="25" fill="#00FFFF"/>
<rect x="909" y="87" width="14" height="11.5" fill="#000"/>
<rect x="910" y="88" width="12" height="9.5" fill="#00FFFF"/>
<rect x="920" y="87" width="1" height="11.5" fill="#000"/>
<path d="M910,88 l10,9.5 M920,88 l-10,9.5" stroke="#000" stroke-width="1.300" fill="none" shape-rendering="auto"/>
<rect x="910" y="100" width="11" height="10.5" fill="#000"/>
<rect x="911" y="101" width="9" height="8.5" fill="#00FFFF"/>
<rect x="813" y="207" width="3" height="10.5" fill="#000"/>
<rect x="814" y="208" width="1" height="8.5" fill="#00FFFF"/>
<rect x="815" y="199" width="7" height="27" fill="#000"/>
<rect x="816" y="200" width="5" height="25" fill="#00FFFF"/>
<rect x="821" y="207" width="14" height="11.5" fill="#000"/>
<rect x="822" y="208" width="12" height="9.5" fill="#00FFFF"/>
<rect x="832" y="207" width="1" height="11.5" fill="#000"/>
<path d="M822,208 l10,9.5 M832,208 l-10,9.5" stroke="#000" stroke-width="1.300" fill="none" shape-rendering="auto"/>
<rect x="822" y="220" width="11" height="10.5" fill="#000"/>
<rect x="823" y="221" width="9" height="8.5" fill="#00FFFF"/>
<rect x="953" y="207" width="3" height="10.5" fill="#000"/>
<rect x="954" y="208" width="1" height="8.5" fill="#00FFFF"/>
<rect x="955" y="199" width="7" height="27" fill="#000"/>
<rect x="956" y="200" width="5" height="25" fill="#00FFFF"/>
<rect x="961" y="207" width="14" height="11.5" fill="#000"/>
<rect x="962" y="208" width="12" height="9.5" fill="#00FFFF"/>
<rect x="972" y="207" width="1" height="11.5" fill="#000"/>
<path d="M962,208 l10,9.5 M972,208 l-10,9.5" stroke="#000" stroke-width="1.300" fill="none" shape-rendering="auto"/>
<rect x="962" y="220" width="11" height="10.5" fill="#000"/>
<rect x="963" y="221" width="9" height="8.5" fill="#00FFFF"/>
<polygon points="872.5,78.5 890.5,78.5 881.5,101" fill="#00FFFF" stroke="#000" stroke-width="1.2" />
<rect x="872" y="73" width="19" height="6" fill="#000"/>
<rect x="873" y="74" width="17" height="4" fill="#00FFFF"/>
<circle cx="881.5" cy="104.5" r="4.200" fill="#00FFFF" stroke="#000" stroke-width=".9" shape-rendering="auto"/>
<circle cx="881.5" cy="104.5" r="2.300" fill="#00FFFF" stroke="#000" stroke-width=".8" shape-rendering="auto"/>
<polygon points="840.5,290.5 858.5,290.5 849.5,313" fill="#00FFFF" stroke="#000" stroke-width="1.2" />
<rect x="840" y="285" width="19" height="6" fill="#000"/>
<rect x="841" y="286" width="17" height="4" fill="#00FFFF"/>
<circle cx="849.5" cy="316.5" r="4.200" fill="#00FFFF" stroke="#000" stroke-width=".9" shape-rendering="auto"/>
<circle cx="849.5" cy="316.5" r="2.300" fill="#00FFFF" stroke="#000" stroke-width=".8" shape-rendering="auto"/>
<polygon points="869.5,290.5 887.5,290.5 878.5,313" fill="#00FFFF" stroke="#000" stroke-width="1.2" />
<rect x="869" y="285" width="19" height="6" fill="#000"/>
<rect x="870" y="286" width="17" height="4" fill="#00FFFF"/>
<circle cx="878.5" cy="316.5" r="4.200" fill="#00FFFF" stroke="#000" stroke-width=".9" shape-rendering="auto"/>
<circle cx="878.5" cy="316.5" r="2.300" fill="#00FFFF" stroke="#000" stroke-width=".8" shape-rendering="auto"/>
<polygon points="150.5,628.5 168.5,628.5 159.5,651" fill="#00FFFF" stroke="#000" stroke-width="1.2" />
<rect x="150" y="623" width="19" height="6" fill="#000"/>
<rect x="151" y="624" width="17" height="4" fill="#00FFFF"/>
<rect x="155.5" y="623" width="1" height="6" fill="#000"/>
<rect x="162.5" y="623" width="1" height="6" fill="#000"/>
<circle cx="159.5" cy="654.5" r="4.200" fill="#00FFFF" stroke="#000" stroke-width=".9" shape-rendering="auto"/>
<circle cx="159.5" cy="654.5" r="2.300" fill="#00FFFF" stroke="#000" stroke-width=".8" shape-rendering="auto"/>
<rect x="774" y="158" width="35" height="74" fill="#000"/>
<rect x="775" y="159" width="33" height="72" fill="#00FFFF"/>
<rect x="774" y="171" width="35" height="1" fill="#000"/>
<rect x="805" y="160" width="5" height="11" fill="#000"/>
<rect x="806" y="161" width="3" height="9" fill="#00FFFF"/>
<path d="M808,174.5 H783.5 V190.5 L808.5,202.5" fill="none" stroke="#000" stroke-width="1" shape-rendering="auto"/>
<rect x="777" y="231" width="4" height="4" fill="#000"/>
<rect x="778" y="232" width="2" height="2" fill="#00FFFF"/>
<rect x="802" y="231" width="4" height="4" fill="#000"/>
<rect x="803" y="232" width="2" height="2" fill="#00FFFF"/>
<polygon points="774.5,231.5 808.5,231.5 794.5,270 788.5,270" fill="#00FFFF" stroke="#000" stroke-width="1.2" />
<rect x="777" y="231" width="4" height="4" fill="#000"/>
<rect x="778" y="232" width="2" height="2" fill="#00FFFF"/>
<rect x="802" y="231" width="4" height="4" fill="#000"/>
<rect x="803" y="232" width="2" height="2" fill="#00FFFF"/>
<rect x="787" y="278" width="9" height="3" fill="#000"/>
<rect x="788" y="279" width="7" height="1" fill="#00FFFF"/>
<rect x="787" y="280.5" width="9" height="3" fill="#000"/>
<rect x="788" y="281.5" width="7" height="1" fill="#00FFFF"/>
<circle cx="791.5" cy="274.5" r="4.5" fill="#00FFFF" stroke="#000" stroke-width="1" shape-rendering="auto"/>
<circle cx="791.5" cy="274.5" r="2.2" fill="#00FFFF" stroke="#000" stroke-width="1" shape-rendering="auto"/>
<rect x="914" y="158" width="35" height="74" fill="#000"/>
<rect x="915" y="159" width="33" height="72" fill="#00FFFF"/>
<rect x="914" y="171" width="35" height="1" fill="#000"/>
<rect x="945" y="160" width="5" height="11" fill="#000"/>
<rect x="946" y="161" width="3" height="9" fill="#00FFFF"/>
<path d="M948,174.5 H923.5 V190.5 L948.5,202.5" fill="none" stroke="#000" stroke-width="1" shape-rendering="auto"/>
<rect x="917" y="231" width="4" height="4" fill="#000"/>
<rect x="918" y="232" width="2" height="2" fill="#00FFFF"/>
<rect x="942" y="231" width="4" height="4" fill="#000"/>
<rect x="943" y="232" width="2" height="2" fill="#00FFFF"/>
<polygon points="914.5,231.5 948.5,231.5 934.5,270 928.5,270" fill="#00FFFF" stroke="#000" stroke-width="1.2" />
<rect x="917" y="231" width="4" height="4" fill="#000"/>
<rect x="918" y="232" width="2" height="2" fill="#00FFFF"/>
<rect x="942" y="231" width="4" height="4" fill="#000"/>
<rect x="943" y="232" width="2" height="2" fill="#00FFFF"/>
<rect x="927" y="278" width="9" height="3" fill="#000"/>
<rect x="928" y="279" width="7" height="1" fill="#00FFFF"/>
<rect x="927" y="280.5" width="9" height="3" fill="#000"/>
<rect x="928" y="281.5" width="7" height="1" fill="#00FFFF"/>
<circle cx="931.5" cy="274.5" r="4.5" fill="#00FFFF" stroke="#000" stroke-width="1" shape-rendering="auto"/>
<circle cx="931.5" cy="274.5" r="2.2" fill="#00FFFF" stroke="#000" stroke-width="1" shape-rendering="auto"/>
<rect x="718" y="210" width="1" height="10" fill="#00FFFF"/>
<rect x="756" y="210" width="1" height="10" fill="#00FFFF"/>
<rect x="719" y="213" width="37" height="1" fill="#00FFFF"/>
<rect x="719" y="216" width="37" height="1" fill="#00FFFF"/>
<use href="#fl" x="722" y="210"/>
<use href="#fl" x="734" y="210"/>
<use href="#fl" x="745" y="210"/>
<rect x="748" y="212" width="6" height="6" fill="#000"/>
<rect x="749" y="213" width="4" height="4" fill="#00FFFF"/>
<polygon points="998,68.5 1008,68.5 1011.5,72.5 1011.5,82.5 1015,87.5 1015,88.5 1008,88.5 1005,93 1002,88.5 991.5,88.5 991.5,87.5 994.8,82.5 994.8,72.5" fill="#00FFFF" shape-rendering="auto"/>
<path d="M1002,89 L1005,93 M991.500,88 L994.800,82.500 V72.500 L998,68.500 H1008" fill="none" stroke="#000" stroke-width="1" shape-rendering="auto"/>
<path d="M1008,68.500 L1011.500,72.500 V82.500 L1015,87.500 V88.700 H1008 L1005,93 M1002,88.700 H991.500" fill="none" stroke="#fff" stroke-width="1" shape-rendering="auto"/>
<rect x="890" y="371" width="6" height="3" fill="#000"/>
<rect x="891" y="372" width="4" height="1" fill="#00FFFF"/>
<polygon points="889.5,390 897.5,390 896.5,394.5 890.5,394.5" fill="#00FFFF" stroke="#000" stroke-width="1" />
<rect x="887" y="373" width="12" height="18" fill="#000"/>
<rect x="888" y="374" width="10" height="16" fill="#00FFFF"/>
<rect x="890" y="376" width="6.5" height="4" fill="#000"/>
<rect x="891" y="377" width="4.5" height="2" fill="#00FFFF"/>
<rect x="890" y="396" width="6" height="6" fill="#000"/>
<rect x="891" y="397" width="4" height="4" fill="#00FFFF"/>
<rect x="884" y="404" width="7" height="28" fill="#000"/>
<rect x="885" y="405" width="5" height="26" fill="#00FFFF"/>
<rect x="924" y="418" width="4" height="19" fill="#000"/>
<rect x="925" y="419" width="2" height="17" fill="#00FFFF"/>
<path d="M887.5,436.5 v-12 q0,-5 5,-5 h2 v17 z" fill="#00FFFF" stroke="#000" stroke-width="1" shape-rendering="auto"/>
<rect x="894" y="424" width="8.5" height="10" fill="#000"/>
<rect x="895" y="425" width="6.5" height="8" fill="#00FFFF"/>
<circle cx="895.500" cy="424.5" r="1.5" fill="#00FFFF" stroke="#000" stroke-width="1" shape-rendering="auto"/>
<polygon points="899,418.5 917.5,418.5 910.5,429.5 906,429.5" fill="#00FFFF" stroke="#000" stroke-width="1" shape-rendering="auto"/>
<rect x="906" y="429.5" width="5" height="3" fill="#000"/>
<rect x="907" y="430.5" width="3" height="1" fill="#00FFFF"/>
<rect x="927.5" y="407" width="3" height="6" fill="#000"/>
<rect x="928.5" y="408" width="1" height="4" fill="#00FFFF"/>
<rect x="890" y="401" width="38.5" height="17.5" fill="#000"/>
<rect x="891" y="402" width="36.5" height="15.5" fill="#00FFFF"/>
<rect x="896" y="404" width="25.5" height="12" fill="#000"/>
<rect x="897" y="405" width="23.5" height="10" fill="#00FFFF"/>
<circle cx="909.5" cy="454.3" r="7" fill="#00FFFF" stroke="#000" stroke-width="1" shape-rendering="auto"/>
<path d="M904.5,449.300 l10,10 M914.5,449.300 l-10,10" stroke="#000" stroke-width="1" shape-rendering="auto"/>
<circle cx="909.5" cy="454.3" r="3" fill="#00FFFF" stroke="#000" stroke-width="1" shape-rendering="auto"/>
<path d="M846,535.5 v-2.500 a5,5 0 0 0 -5,-5 a5,5 0 0 0 -5,5 v6 a5,5 0 0 0 5,5" fill="none" stroke="#000" stroke-width="3.600" shape-rendering="auto"/>
<path d="M846,535.5 v-2.500 a5,5 0 0 0 -5,-5 a5,5 0 0 0 -5,5 v6 a5,5 0 0 0 5,5" fill="none" stroke="#00FFFF" stroke-width="1.600" shape-rendering="auto"/>
<circle cx="845.5" cy="536" r="3.8" fill="#00FFFF" stroke="#000" stroke-width="1" shape-rendering="auto"/>
<circle cx="859.5" cy="536.3" r="3.3" fill="#00FFFF" stroke="#000" stroke-width="1" shape-rendering="auto"/>
<rect x="864" y="541" width="4" height="3" fill="#000"/>
<rect x="865" y="542" width="2" height="1" fill="#00FFFF"/>
<rect x="839" y="539" width="26" height="6" fill="#000"/>
<rect x="840" y="540" width="24" height="4" fill="#00FFFF"/>
<rect x="870.7" y="531" width="8.5" height="6" fill="#000"/>
<rect x="871.7" y="532" width="6.5" height="4" fill="#00FFFF"/>
<rect x="870.7" y="539" width="8.5" height="6" fill="#000"/>
<rect x="871.7" y="540" width="6.5" height="4" fill="#00FFFF"/>
<path d="M62,651.5 v-2.500 a5,5 0 0 0 -5,-5 a5,5 0 0 0 -5,5 v6 a5,5 0 0 0 5,5" fill="none" stroke="#000" stroke-width="3.600" shape-rendering="auto"/>
<path d="M62,651.5 v-2.500 a5,5 0 0 0 -5,-5 a5,5 0 0 0 -5,5 v6 a5,5 0 0 0 5,5" fill="none" stroke="#00FFFF" stroke-width="1.600" shape-rendering="auto"/>
<circle cx="61.5" cy="652" r="3.8" fill="#00FFFF" stroke="#000" stroke-width="1" shape-rendering="auto"/>
<circle cx="75.5" cy="652.3" r="3.3" fill="#00FFFF" stroke="#000" stroke-width="1" shape-rendering="auto"/>
<rect x="80" y="657" width="4" height="3" fill="#000"/>
<rect x="81" y="658" width="2" height="1" fill="#00FFFF"/>
<rect x="55" y="655" width="26" height="6" fill="#000"/>
<rect x="56" y="656" width="24" height="4" fill="#00FFFF"/>
<rect x="86.7" y="647" width="8.5" height="6" fill="#000"/>
<rect x="87.7" y="648" width="6.5" height="4" fill="#00FFFF"/>
<rect x="86.7" y="655" width="8.5" height="6" fill="#000"/>
<rect x="87.7" y="656" width="6.5" height="4" fill="#00FFFF"/>
<rect x="172.5" y="682" width="11" height="13" fill="#000"/>
<rect x="173.5" y="683" width="9" height="11" fill="#00FFFF"/>
<rect x="175.5" y="682" width="1" height="13" fill="#000"/>
<rect x="179.5" y="682" width="1" height="13" fill="#000"/>
<rect x="176" y="694.5" width="4" height="4" fill="#000"/>
<rect x="152" y="698" width="51" height="9" fill="#000"/>
<rect x="153" y="699" width="49" height="7" fill="#00FFFF"/>
<rect x="444.5" y="686" width="11" height="13" fill="#000"/>
<rect x="445.5" y="687" width="9" height="11" fill="#00FFFF"/>
<rect x="447.5" y="686" width="1" height="13" fill="#000"/>
<rect x="451.5" y="686" width="1" height="13" fill="#000"/>
<rect x="448" y="698.5" width="4" height="4" fill="#000"/>
<rect x="424" y="702" width="51" height="9" fill="#000"/>
<rect x="425" y="703" width="49" height="7" fill="#00FFFF"/>
<path d="M357.5,594.5 h22 v51 h-6 v-9 l-5,-7 l-5,7 v9 h-6 z" fill="#00FFFF" stroke="#000" stroke-width="1" shape-rendering="auto"/>
<rect x="364" y="598" width="8.5" height="6" fill="#000"/>
<rect x="365" y="599" width="6.5" height="4" fill="#00FFFF"/>
<rect x="359" y="617" width="8" height="6" fill="#000"/>
<rect x="360" y="618" width="6" height="4" fill="#00FFFF"/>
<rect x="370" y="617" width="8" height="6" fill="#000"/>
<rect x="371" y="618" width="6" height="4" fill="#00FFFF"/>
<rect x="358.5" y="630.5" width="4" height="18" fill="#000"/>
<rect x="359.5" y="631.5" width="2" height="16" fill="#00FFFF"/>
<rect x="374.5" y="630.5" width="4" height="18" fill="#000"/>
<rect x="375.5" y="631.5" width="2" height="16" fill="#00FFFF"/>
<rect x="353" y="645.5" width="14" height="12.5" fill="#000"/>
<rect x="354" y="646.5" width="12" height="10.5" fill="#00FFFF"/>
<rect x="370" y="645.5" width="14" height="12.5" fill="#000"/>
<rect x="371" y="646.5" width="12" height="10.5" fill="#00FFFF"/>
<rect x="359.5" y="646" width="3" height="3" fill="#000"/>
<rect x="360.5" y="647" width="1" height="1" fill="#00FFFF"/>
<rect x="374.5" y="646" width="3" height="3" fill="#000"/>
<rect x="375.5" y="647" width="1" height="1" fill="#00FFFF"/>
<polygon points="353.5,657.5 383.5,657.5 371,679.5 366,679.5" fill="#00FFFF" stroke="#000" stroke-width="1" shape-rendering="auto"/>
<path d="M356,659 l11,20 M381,659 l-11,20" stroke="#000" stroke-width="1" fill="none" shape-rendering="auto"/>
<rect x="365.5" y="680" width="6.5" height="9.5" fill="#000"/>
<rect x="366.5" y="681" width="4.5" height="7.5" fill="#00FFFF"/>
<polygon points="359.5,693 362,693 362,727.5 355.5,727.5 355.5,722 358,705" fill="#00FFFF" stroke="#000" stroke-width="1" shape-rendering="auto"/>
<polygon points="399.5,693 402,693 403.5,705 405.5,722 405.5,727.5 399.5,727.5" fill="#00FFFF" stroke="#000" stroke-width="1" shape-rendering="auto"/>
<rect x="366" y="693" width="6" height="8" fill="#000"/>
<rect x="367" y="694" width="4" height="6" fill="#00FFFF"/>
<polygon points="367,700.5 371,700.5 370,706.5 368,706.5" fill="#00FFFF" stroke="#000" stroke-width="1" shape-rendering="auto"/>
<rect x="372.5" y="693" width="6" height="8" fill="#000"/>
<rect x="373.5" y="694" width="4" height="6" fill="#00FFFF"/>
<polygon points="373.5,700.5 377.5,700.5 376.5,706.5 374.5,706.5" fill="#00FFFF" stroke="#000" stroke-width="1" shape-rendering="auto"/>
<rect x="384.5" y="693" width="6" height="8" fill="#000"/>
<rect x="385.5" y="694" width="4" height="6" fill="#00FFFF"/>
<polygon points="385.5,700.5 389.5,700.5 388.5,706.5 386.5,706.5" fill="#00FFFF" stroke="#000" stroke-width="1" shape-rendering="auto"/>
<rect x="391.5" y="693" width="6" height="8" fill="#000"/>
<rect x="392.5" y="694" width="4" height="6" fill="#00FFFF"/>
<polygon points="392.5,700.5 396.5,700.5 395.5,706.5 393.5,706.5" fill="#00FFFF" stroke="#000" stroke-width="1" shape-rendering="auto"/>
<polygon points="385,688.5 385,685 386.5,683 388.5,683 390,685 390,688.5" fill="#00FFFF" stroke="#000" stroke-width="1" shape-rendering="auto"/>
<rect x="359" y="688.5" width="44" height="5.5" fill="#000"/>
<rect x="360" y="689.5" width="42" height="3.5" fill="#00FFFF"/>
<rect x="347" y="713.5" width="10" height="14.5" fill="#000"/>
<rect x="348" y="714.5" width="8" height="12.5" fill="#00FFFF"/>
<path d="M353,714 l3,5" stroke="#000" stroke-width="1" shape-rendering="auto"/>
<rect x="365" y="710.5" width="1" height="9.5" fill="#000"/>
<rect x="362" y="714" width="4" height="1" fill="#000"/>
<rect x="362" y="717" width="4" height="1" fill="#000"/>
<rect x="686" y="581" width="16" height="20" fill="#000"/>
<rect x="687" y="582" width="14" height="18" fill="#00FFFF"/>
<circle cx="694" cy="591" r="9.2" fill="#00FFFF" stroke="#000" stroke-width="1" shape-rendering="auto"/>
<circle cx="694" cy="591" r="6.2" fill="#00FFFF" stroke="#000" stroke-width="1" shape-rendering="auto"/>
<polygon points="694,588 697,591 694,594 691,591" fill="#80FFFF" stroke="#000" stroke-width="1" shape-rendering="auto"/>
<rect x="684" y="600" width="21" height="6" fill="#000"/>
<rect x="685" y="601" width="19" height="4" fill="#00FFFF"/>
<polygon points="603.5,651.5 623.5,651.5 618.5,666.5 608.5,666.5" fill="#00FFFF" stroke="#000" stroke-width="1" shape-rendering="auto"/>
<rect x="603" y="638" width="21" height="14" fill="#000"/>
<rect x="604" y="639" width="19" height="12" fill="#00FFFF"/>
<rect x="609" y="642" width="9" height="6" fill="#000"/>
<rect x="610" y="643" width="7" height="4" fill="#00FFFF"/>
<rect x="609" y="654" width="9" height="6" fill="#000"/>
<rect x="610" y="655" width="7" height="4" fill="#00FFFF"/>
<rect x="607" y="666" width="33" height="7" fill="#000"/>
<rect x="608" y="667" width="31" height="5" fill="#00FFFF"/>
<rect x="630.5" y="672.5" width="6" height="2.5" fill="#000"/>
<rect x="631.5" y="673.5" width="4" height="0.5" fill="#00FFFF"/>
<rect x="627.5" y="674" width="12" height="13" fill="#000"/>
<rect x="628.5" y="675" width="10" height="11" fill="#00FFFF"/>
<polygon points="628,686.5 639,686.5 634.5,699 632.5,699" fill="#00FFFF" stroke="#000" stroke-width="1" shape-rendering="auto"/>
<path d="M628,691 l3.5,8 M639,691 l-3.5,8" stroke="#000" stroke-width="1" fill="none" shape-rendering="auto"/>
<polygon points="628.5,700 638.5,700 638.5,703 636,706.5 631,706.5 628.5,703" fill="#00FFFF" stroke="#000" stroke-width="1" shape-rendering="auto"/>
<path d="M627.5,714.5 v12 M639.5,714.5 v12 M627.5,715 h12 M627.5,715 l3,5 M639.5,715 l-3,5" stroke="#000" stroke-width="1" fill="none"/>
<rect x="631.5" y="707" width="4" height="15.5" fill="#C0C0C0"/>
<rect x="630.5" y="719" width="6" height="3" fill="#C0C0C0"/>
<rect x="631" y="707" width="1" height="15" fill="#404040"/>
<rect x="635" y="707" width="1" height="15" fill="#404040"/>
<polygon points="692.5,651.5 712.5,651.5 705.5,668 699.5,668" fill="#00FFFF" stroke="#000" stroke-width="1" shape-rendering="auto"/>
<rect x="692" y="638" width="21" height="14" fill="#000"/>
<rect x="693" y="639" width="19" height="12" fill="#00FFFF"/>
<rect x="698" y="642" width="9" height="6" fill="#000"/>
<rect x="699" y="643" width="7" height="4" fill="#00FFFF"/>
<rect x="698" y="654" width="9" height="6" fill="#000"/>
<rect x="699" y="655" width="7" height="4" fill="#00FFFF"/>
<rect x="699.5" y="667.5" width="6" height="7" fill="#000"/>
<rect x="700.5" y="668.5" width="4" height="5" fill="#00FFFF"/>
<rect x="696.5" y="674" width="12" height="13" fill="#000"/>
<rect x="697.5" y="675" width="10" height="11" fill="#00FFFF"/>
<polygon points="697,686.5 708,686.5 703.5,699 701.5,699" fill="#00FFFF" stroke="#000" stroke-width="1" shape-rendering="auto"/>
<path d="M697,691 l3.5,8 M708,691 l-3.5,8" stroke="#000" stroke-width="1" fill="none" shape-rendering="auto"/>
<polygon points="697.5,700 707.5,700 707.5,703 705,706.5 700,706.5 697.5,703" fill="#00FFFF" stroke="#000" stroke-width="1" shape-rendering="auto"/>
<path d="M696.5,714.5 v12 M708.5,714.5 v12 M696.5,715 h12 M696.5,715 l3,5 M708.5,715 l-3,5" stroke="#000" stroke-width="1" fill="none"/>
<rect x="700.5" y="707" width="4" height="15.5" fill="#C0C0C0"/>
<rect x="699.5" y="719" width="6" height="3" fill="#C0C0C0"/>
<rect x="700" y="707" width="1" height="15" fill="#404040"/>
<rect x="704" y="707" width="1" height="15" fill="#404040"/>
<polygon points="732.5,651.5 752.5,651.5 745.5,668 739.5,668" fill="#00FFFF" stroke="#000" stroke-width="1" shape-rendering="auto"/>
<rect x="732" y="638" width="21" height="14" fill="#000"/>
<rect x="733" y="639" width="19" height="12" fill="#00FFFF"/>
<rect x="738" y="642" width="9" height="6" fill="#000"/>
<rect x="739" y="643" width="7" height="4" fill="#00FFFF"/>
<rect x="738" y="654" width="9" height="6" fill="#000"/>
<rect x="739" y="655" width="7" height="4" fill="#00FFFF"/>
<rect x="739.5" y="667.5" width="6" height="7" fill="#000"/>
<rect x="740.5" y="668.5" width="4" height="5" fill="#00FFFF"/>
<rect x="736.5" y="674" width="12" height="13" fill="#000"/>
<rect x="737.5" y="675" width="10" height="11" fill="#00FFFF"/>
<polygon points="737,686.5 748,686.5 743.5,699 741.5,699" fill="#00FFFF" stroke="#000" stroke-width="1" shape-rendering="auto"/>
<path d="M737,691 l3.5,8 M748,691 l-3.5,8" stroke="#000" stroke-width="1" fill="none" shape-rendering="auto"/>
<polygon points="737.5,700 747.5,700 747.5,703 745,706.5 740,706.5 737.5,703" fill="#00FFFF" stroke="#000" stroke-width="1" shape-rendering="auto"/>
<path d="M736.5,714.5 v12 M748.5,714.5 v12 M736.5,715 h12 M736.5,715 l3,5 M748.5,715 l-3,5" stroke="#000" stroke-width="1" fill="none"/>
<rect x="740.5" y="707" width="4" height="15.5" fill="#C0C0C0"/>
<rect x="739.5" y="719" width="6" height="3" fill="#C0C0C0"/>
<rect x="740" y="707" width="1" height="15" fill="#404040"/>
<rect x="744" y="707" width="1" height="15" fill="#404040"/>
<polygon points="772.5,651.5 792.5,651.5 785.5,668 779.5,668" fill="#00FFFF" stroke="#000" stroke-width="1" shape-rendering="auto"/>
<rect x="772" y="638" width="21" height="14" fill="#000"/>
<rect x="773" y="639" width="19" height="12" fill="#00FFFF"/>
<rect x="778" y="642" width="9" height="6" fill="#000"/>
<rect x="779" y="643" width="7" height="4" fill="#00FFFF"/>
<rect x="778" y="654" width="9" height="6" fill="#000"/>
<rect x="779" y="655" width="7" height="4" fill="#00FFFF"/>
<rect x="779.5" y="667.5" width="6" height="7" fill="#000"/>
<rect x="780.5" y="668.5" width="4" height="5" fill="#00FFFF"/>
<rect x="776.5" y="674" width="12" height="13" fill="#000"/>
<rect x="777.5" y="675" width="10" height="11" fill="#00FFFF"/>
<polygon points="777,686.5 788,686.5 783.5,699 781.5,699" fill="#00FFFF" stroke="#000" stroke-width="1" shape-rendering="auto"/>
<path d="M777,691 l3.5,8 M788,691 l-3.5,8" stroke="#000" stroke-width="1" fill="none" shape-rendering="auto"/>
<polygon points="777.5,700 787.5,700 787.5,703 785,706.5 780,706.5 777.5,703" fill="#00FFFF" stroke="#000" stroke-width="1" shape-rendering="auto"/>
<path d="M776.5,714.5 v12 M788.5,714.5 v12 M776.5,715 h12 M776.5,715 l3,5 M788.5,715 l-3,5" stroke="#000" stroke-width="1" fill="none"/>
<rect x="780.5" y="707" width="4" height="15.5" fill="#C0C0C0"/>
<rect x="779.5" y="719" width="6" height="3" fill="#C0C0C0"/>
<rect x="780" y="707" width="1" height="15" fill="#404040"/>
<rect x="784" y="707" width="1" height="15" fill="#404040"/>
<polygon points="815.5,651.5 835.5,651.5 828.5,668.5 822.5,668.5" fill="#00FFFF" stroke="#000" stroke-width="1" shape-rendering="auto"/>
<rect x="815" y="638" width="21" height="14" fill="#000"/>
<rect x="816" y="639" width="19" height="12" fill="#00FFFF"/>
<rect x="821" y="642" width="9" height="6" fill="#000"/>
<rect x="822" y="643" width="7" height="4" fill="#00FFFF"/>
<rect x="821" y="654" width="9" height="6" fill="#000"/>
<rect x="822" y="655" width="7" height="4" fill="#00FFFF"/>
<text x="38" y="436.3" class="b" font-size="13" textLength="23" lengthAdjust="spacing">501</text>
<text x="88" y="436.3" class="b" font-size="13" textLength="23" lengthAdjust="spacing">502</text>
<text x="138" y="436.3" class="b" font-size="13" textLength="23" lengthAdjust="spacing">503</text>
<text x="188" y="436.3" class="b" font-size="13" textLength="23" lengthAdjust="spacing">504</text>
<text x="297.8" y="286.2" class="b" font-size="13" textLength="23" lengthAdjust="spacing">511</text>
<text x="414.2" y="286.2" class="b" font-size="13" textLength="23" lengthAdjust="spacing">512</text>
<text x="532" y="286.2" class="b" font-size="13" textLength="23" lengthAdjust="spacing">513</text>
<text x="650" y="286.2" class="b" font-size="13" textLength="23" lengthAdjust="spacing">514</text>
<text x="319" y="334.2" class="b" font-size="13" textLength="23" lengthAdjust="spacing">515</text>
<text x="397.2" y="334.2" class="b" font-size="13" textLength="23" lengthAdjust="spacing">516</text>
<text x="517" y="334.2" class="b" font-size="13" textLength="23" lengthAdjust="spacing">529</text>
<text x="633.2" y="334.2" class="b" font-size="13" textLength="23" lengthAdjust="spacing">518</text>
<text x="429.2" y="370.2" class="b" font-size="13" textLength="23" lengthAdjust="spacing">519</text>
<text x="549" y="370.2" class="b" font-size="13" textLength="23" lengthAdjust="spacing">517</text>
<text x="665.2" y="370.2" class="b" font-size="13" textLength="23" lengthAdjust="spacing">530</text>
<text x="301" y="394.3" class="b" font-size="13" textLength="23" lengthAdjust="spacing">523</text>
<text x="400.2" y="558" class="b" font-size="13" textLength="23" lengthAdjust="spacing">520</text>
<text x="793" y="442" class="b" font-size="13" textLength="15" lengthAdjust="spacing">87</text>
<text x="757.5" y="96" class="b" font-size="13" textLength="23" lengthAdjust="spacing">550</text>
<text x="839.5" y="89.2" class="b" font-size="13" textLength="23" lengthAdjust="spacing">706</text>
<text x="929.5" y="99.8" class="b" font-size="13" textLength="23" lengthAdjust="spacing">707</text>
<text x="817" y="188.3" class="b" font-size="13" textLength="23" lengthAdjust="spacing">552</text>
<text x="841" y="220" class="b" font-size="13" textLength="23" lengthAdjust="spacing">551</text>
<text x="957" y="188.3" class="b" font-size="13" textLength="23" lengthAdjust="spacing">554</text>
<text x="981" y="220" class="b" font-size="13" textLength="23" lengthAdjust="spacing">553</text>
<text x="807.5" y="301.3" class="b" font-size="13" textLength="23" lengthAdjust="spacing">701</text>
<text x="897.5" y="301.3" class="b" font-size="13" textLength="23" lengthAdjust="spacing">702</text>
<text x="937.4" y="417" class="b" font-size="13" textLength="23" lengthAdjust="spacing">703</text>
<text x="922.6" y="475" class="b" font-size="13" textLength="23" lengthAdjust="spacing">705</text>
<text x="840" y="520.2" class="b" font-size="13" textLength="23" lengthAdjust="spacing">704</text>
<text x="723" y="238.2" class="b" font-size="13" textLength="23" lengthAdjust="spacing">427</text>
<text x="56" y="636" class="b" font-size="13" textLength="23" lengthAdjust="spacing">413</text>
<text x="118.8" y="646.2" class="b" font-size="13" textLength="23" lengthAdjust="spacing">420</text>
<text x="191" y="689" class="b" font-size="13" textLength="23" lengthAdjust="spacing">522</text>
<text x="391" y="675.2" class="b" font-size="13" textLength="23" lengthAdjust="spacing">521</text>
<text x="463.5" y="693.2" class="b" font-size="13" textLength="23" lengthAdjust="spacing">531</text>
<text x="653.3" y="598.2" class="b" font-size="13" textLength="23" lengthAdjust="spacing">528</text>
<text x="603" y="630.2" class="b" font-size="13" textLength="23" lengthAdjust="spacing">525</text>
<text x="692.3" y="630.2" class="b" font-size="13" textLength="23" lengthAdjust="spacing">528</text>
<text x="732.2" y="630.2" class="b" font-size="13" textLength="23" lengthAdjust="spacing">527</text>
<text x="772.5" y="630.2" class="b" font-size="13" textLength="23" lengthAdjust="spacing">526</text>
<text x="815" y="630.2" class="b" font-size="13" textLength="15" lengthAdjust="spacing">96</text>
<text x="185.8" y="76.2" class="b" font-size="12.5" textLength="32.2" lengthAdjust="spacing">DB14</text>
<text x="816" y="161" class="r" font-size="11" textLength="18" lengthAdjust="spacingAndGlyphs">A10</text>
<text x="956" y="161" class="r" font-size="11" textLength="18" lengthAdjust="spacingAndGlyphs">A12</text>
<text x="866.7" y="152" class="r" font-size="12.5" textLength="26.8" lengthAdjust="spacingAndGlyphs">в 703</text>
<text x="737" y="268.3" class="r" font-size="12.5" textLength="26.8" lengthAdjust="spacingAndGlyphs">в 703</text>
<text x="776.7" y="324.3" class="r" font-size="12.5" textLength="26.8" lengthAdjust="spacingAndGlyphs">в 703</text>
<text x="916.7" y="324.3" class="r" font-size="12.5" textLength="26.8" lengthAdjust="spacingAndGlyphs">в 703</text>
<text x="968.7" y="458" class="r" font-size="12.5" textLength="26.8" lengthAdjust="spacingAndGlyphs">в 108</text>
<text x="184.7" y="724.5" class="r" font-size="12.5" textLength="25" lengthAdjust="spacingAndGlyphs">в 701</text>
<text x="456.7" y="728.5" class="r" font-size="12.5" textLength="26.3" lengthAdjust="spacingAndGlyphs">в 702</text>
<text x="140.7" y="573" class="r" font-size="12.5" textLength="44.8" lengthAdjust="spacingAndGlyphs">мука 1/с</text>
<text x="238.7" y="719.2" class="r" font-size="12.5" textLength="103.5" lengthAdjust="spacingAndGlyphs">Выбой муки 25-50 кг</text>
<text x="513.2" y="707.8" class="r" font-size="12.5" textLength="107.5" lengthAdjust="spacingAndGlyphs">Выбой крупки/манки</text>
<text x="547" y="721" class="r" font-size="12.5" textLength="39.5" lengthAdjust="spacingAndGlyphs">25-50 кг</text>
<text x="851.2" y="689.8" class="r" font-size="12.5" textLength="78" lengthAdjust="spacingAndGlyphs">Фасовка 1-2 кг</text>
<text x="806" y="719.8" class="r" font-size="12.5" textLength="84" lengthAdjust="spacingAndGlyphs">Фасовка 5-10 кг</text>
<rect x="0" y="0" width="1024" height="40" fill="url(#tbg)"/>
<rect x="0" y="38" width="1024" height="1" fill="#C9C7BD"/>
<rect x="0" y="39" width="1024" height="1" fill="#A9A69A"/>
<rect x="0" y="40" width="1024" height="1" fill="#fff"/>
<rect x="50" y="0" width="1" height="39" fill="#ACA899"/>
<rect x="51" y="0" width="1" height="39" fill="#fff"/>
<rect x="237" y="0" width="1" height="39" fill="#ACA899"/>
<rect x="238" y="0" width="1" height="39" fill="#fff"/>
<rect x="424" y="0" width="1" height="39" fill="#ACA899"/>
<rect x="425" y="0" width="1" height="39" fill="#fff"/>
<rect x="896" y="0" width="1" height="39" fill="#ACA899"/>
<rect x="897" y="0" width="1" height="39" fill="#fff"/>
<rect x="0" y="41" width="1024" height="20" fill="#D4D0C8"/>
<rect x="0" y="61" width="1024" height="1" fill="#9C988F"/>
<rect x="2" y="41" width="98" height="19" fill="url(#tab)"/>
<rect x="2" y="41" width="1" height="19" fill="#F6F5EE"/>
<rect x="99" y="43" width="1" height="17" fill="#8a887c"/>
<rect x="2" y="41" width="98" height="1" fill="#F6F5EE"/>
<text x="10.6" y="55" font-size="12" font-weight="bold" fill="#000" textLength="83.4" lengthAdjust="spacingAndGlyphs">УПРАВЛЕНИЕ</text>
<rect x="101" y="41" width="98" height="19" fill="url(#tab)"/>
<rect x="101" y="41" width="1" height="19" fill="#F6F5EE"/>
<rect x="198" y="43" width="1" height="17" fill="#8a887c"/>
<rect x="101" y="41" width="98" height="1" fill="#F6F5EE"/>
<text x="111" y="55" font-size="12" font-weight="bold" fill="#000" textLength="82" lengthAdjust="spacingAndGlyphs">Зерноочистка</text>
<rect x="200" y="41" width="60" height="19" fill="url(#tab)"/>
<rect x="200" y="41" width="1" height="19" fill="#F6F5EE"/>
<rect x="259" y="43" width="1" height="17" fill="#8a887c"/>
<rect x="200" y="41" width="60" height="1" fill="#F6F5EE"/>
<text x="209.7" y="55" font-size="12" font-weight="bold" fill="#000" textLength="44.5" lengthAdjust="spacingAndGlyphs">Размол</text>
<rect x="261" y="41" width="126" height="19" fill="url(#tab)"/>
<rect x="261" y="41" width="1" height="19" fill="#F6F5EE"/>
<rect x="386" y="43" width="1" height="17" fill="#8a887c"/>
<rect x="261" y="41" width="126" height="1" fill="#F6F5EE"/>
<text x="270.8" y="55" font-size="12" font-weight="bold" fill="#000" textLength="110.7" lengthAdjust="spacingAndGlyphs">Вальцовые станки</text>
<rect x="388" y="41" width="49" height="19" fill="url(#tab)"/>
<rect x="388" y="41" width="1" height="19" fill="#F6F5EE"/>
<rect x="436" y="43" width="1" height="17" fill="#8a887c"/>
<rect x="388" y="41" width="49" height="1" fill="#F6F5EE"/>
<text x="397.7" y="55" font-size="12" font-weight="bold" fill="#000" textLength="24.3" lengthAdjust="spacingAndGlyphs">БХМ</text>
<rect x="438" y="41" width="53" height="20.500" fill="url(#tsel)"/>
<text x="443.4" y="55" font-size="12" font-weight="bold" fill="#fff" textLength="37.1" lengthAdjust="spacingAndGlyphs">Выбой</text>
<rect x="492" y="41" width="93" height="19" fill="url(#tab)"/>
<rect x="492" y="41" width="1" height="19" fill="#F6F5EE"/>
<rect x="584" y="43" width="1" height="17" fill="#8a887c"/>
<rect x="492" y="41" width="93" height="1" fill="#F6F5EE"/>
<text x="499" y="55" font-size="12" font-weight="bold" fill="#000" textLength="80" lengthAdjust="spacingAndGlyphs">Подключение</text>
<text x="561.5" y="26.5" font-size="19.2" font-style="italic" fill="#000" textLength="265" lengthAdjust="spacing">ОАО "Ключевской элеватор"</text>
<text x="925" y="27" font-size="18.800" font-style="italic" fill="#000" textLength="73" lengthAdjust="spacing">17:25:39</text>
<rect x="0" y="735" width="1024" height="33" fill="#ECE9D8"/>
<rect x="0" y="735" width="1024" height="2" fill="#fff"/>
<rect x="0" y="737" width="1" height="30" fill="#fff"/>
<rect x="1" y="737" width="169" height="1" fill="#ACA899"/>
<rect x="1" y="737" width="1" height="29" fill="#ACA899"/>
<rect x="170" y="737" width="1" height="30" fill="#fff"/>
<rect x="172" y="737" width="850" height="1" fill="#ACA899"/>
<rect x="172" y="737" width="1" height="29" fill="#ACA899"/>
<rect x="1022" y="737" width="1" height="30" fill="#fff"/>
<rect x="0" y="766" width="1024" height="1" fill="#fff"/>
<rect x="0" y="767" width="1024" height="1" fill="#ACA899"/>
<rect x="0" y="62" width="1" height="673" fill="#8C8880"/>
<rect x="1023" y="62" width="1" height="706" fill="#8C8880"/>
<g shape-rendering="auto">
<rect x="8" y="29" width="32" height="7" fill="url(#dith)"/>
<path d="M8,29.500 H40" stroke="#000" stroke-width="1.300"/>
<rect x="17.600" y="5.600" width="15" height="23.400" fill="#6E7F96" stroke="#000" stroke-width="1.400"/>
<polygon points="25,12.500 32.300,6 32.300,29 25,35.300" fill="#D48A3C" stroke="#000" stroke-width="1.100"/>
<path d="M25.800,13 V34.300" stroke="#F6DCA0" stroke-width="1"/>
<rect x="26.800" y="20.500" width="1.800" height="3" fill="#BFEFEF" stroke="#222" stroke-width=".7"/>
</g>
<g shape-rendering="auto">
<path d="M63,34 C66,28 68,25 71.500,22.500" fill="none" stroke="#000" stroke-width="3.600"/>
<path d="M63,34 C66,28 68,25 71.500,22.500" fill="none" stroke="#66788F" stroke-width="1.800"/>
<polygon points="65.500,20.800 73.500,12.500 88.500,12.500 88.500,15 79,24.500 73,24.500 73,22.500 66.500,22.500" fill="#66788F" stroke="#000" stroke-width="1.200"/>
<path d="M66.500,20.800 H76.500 L84,13.500 M76.500,20.800 V24" stroke="#000" stroke-width=".8" fill="none"/>
<path d="M73.500,11.800 H88.300" stroke="#000" stroke-width="2.200"/>
<path d="M72.800,13.300 H86.700 L88.300,15" stroke="#00E400" stroke-width="1.500" fill="none"/>
</g>
<g shape-rendering="auto" fill="#ECEBE6" stroke="#7C7C7C" stroke-width="1.200">
<rect x="118.600" y="10.600" width="17" height="4.200" rx="1.500" fill="#fff" stroke="#666" stroke-width="1.500"/>
<path d="M121,12.700 h12.500" stroke-dasharray="1,1" stroke="#444" stroke-width="1"/>
<polygon points="106.500,24.500 114.500,17.500 126.500,17.500 126.500,19.500 118.500,27.500 113,27.500 113,25.500 107,25.500"/>
<path d="M107,24.500 H117.500 L124.500,18" fill="none" stroke-width=".9"/>
<path d="M106.500,34 c1,-3.500 3,-6 5.500,-7.500 M109,34.500 c1,-3.500 3,-5.500 5,-7" fill="none"/>
</g>
<g shape-rendering="auto">
<path d="M150.500,16.800 h15 v-1.800 h2.300 v1.800 h1.200 a7,7 0 1 1 0,5.400 h-2 v1 h-3 v-1 h-2 v1 h-4 v-1 h-7.500 l-1.800,-2.700 z" fill="#A4A4A4" transform="translate(1.500,2.200)"/>
<path d="M150.500,16.800 h15 v-1.800 h2.300 v1.800 h1.200 a7,7 0 1 1 0,5.400 h-2 v1 h-3 v-1 h-2 v1 h-4 v-1 h-7.500 l-1.800,-2.700 z" fill="#F7F7F5" stroke="#9A9A9A" stroke-width=".9"/>
<circle cx="177.800" cy="19.500" r="2.100" fill="#D8D8D8" stroke="#8A8A8A" stroke-width=".9"/>
</g>
<g shape-rendering="auto">
<rect x="200" y="6.300" width="2.400" height="4.500" fill="#000"/>
<rect x="200.200" y="10.500" width="2" height="10" fill="#fff" stroke="#000" stroke-width=".9"/>
<rect x="198.400" y="19.800" width="5.600" height="14.400" rx="2.600" fill="#9A4A16" stroke="#000" stroke-width="1.200"/>
<path d="M201.200,22 v10.500" stroke="#000" stroke-width=".9"/>
<rect x="213" y="11" width="2.200" height="9.500" fill="#fff" stroke="#000" stroke-width=".9"/>
<path d="M206.500,6.800 h11 c3,0 5,2.800 5.200,6.500 l-1.800,.3 c-.5,-2.200 -1.500,-3.300 -3.200,-3.300 h-1.700 v1.500 h-4 v-1.500 h-3 c-1,0 -1.500,.5 -1.500,1.500 h-1.200 z" fill="#fff" stroke="#000" stroke-width="1"/>
<path d="M212.500,9 l4.500,-1.200" stroke="#2030E0" stroke-width="1.600"/>
<rect x="211.300" y="19.800" width="5.600" height="14.400" rx="2.600" fill="#9A4A16" stroke="#000" stroke-width="1.200"/>
<path d="M214.100,22 v10.500" stroke="#000" stroke-width=".9"/>
</g>
<g shape-rendering="auto" fill="#F6F5F0" stroke="#7E7E7E" stroke-width="1">
<polygon points="249,22 266,5.500 281,17.500 262,35"/>
<polygon points="251.500,22 260.500,13 270.500,23 261.500,32.500"/>
<path d="M260.500,13 l2,-2 l10,10 M256,21 l5,5 M258,19 l5,5 M260,17 l5,5 M254,23 l5,5" stroke="#8C8C8C" stroke-width=".8" fill="none"/>
<path d="M263,19.500 c3,-2.500 7,-2.500 9.500,-.5 l2.500,2 h2.500 v-4 h3 v9.500 h-3 v-1.500 h-8 c-3,0 -5,-1.500 -6,-3.500 c2,-1 3.500,-1 5,0" fill="#E6E4DE" stroke="#5E5E5E"/>
<circle cx="267.500" cy="19.500" r="1.500" fill="none" stroke="#5E5E5E" stroke-width=".8"/>
</g>
<g shape-rendering="auto">
<polygon points="309.300,9.500 320.800,30.700 297.800,30.700" fill="#fff" stroke="url(#wg)" stroke-width="4.600" stroke-linejoin="round"/>
<rect x="308.200" y="17" width="2.200" height="8" fill="#6A6A6A"/>
<rect x="308.200" y="26.300" width="2.200" height="2.200" fill="#6A6A6A"/>
</g>
<g shape-rendering="auto" stroke="#A0A0A0" stroke-width="1" fill="none">
<path d="M341.500,5.500 V33 M337,28.500 H369 M337,14.500 H366 M337,21.500 H366" />
<path d="M340,8 l1.500,-3 l1.500,3 M366.500,27 l3,1.500 l-3,1.500"/>
<rect x="344.5" y="24" width="1.800" height="4" fill="url(#bg)" stroke="none"/>
<rect x="347.5" y="17" width="1.800" height="11" fill="url(#bg)" stroke="none"/>
<rect x="350.5" y="14" width="1.800" height="14" fill="url(#bg)" stroke="none"/>
<rect x="353.5" y="11" width="1.800" height="17" fill="url(#bg)" stroke="none"/>
<rect x="356.5" y="18" width="1.800" height="10" fill="url(#bg)" stroke="none"/>
<rect x="359.5" y="21" width="1.800" height="7" fill="url(#bg)" stroke="none"/>
<rect x="362.5" y="18" width="1.800" height="10" fill="url(#bg)" stroke="none"/>
<path d="M343,31.500 h20" stroke="#D0D0D0" stroke-width="1.500" stroke-dasharray="2,1"/>
</g>
<g shape-rendering="auto">
<rect x="383.500" y="9.500" width="28" height="22" rx="1.500" fill="#EDEDEB" stroke="#A0A0A0" stroke-width="1"/>
<rect x="384" y="10" width="27" height="7.500" fill="url(#hg)"/>
<rect x="385.500" y="11" width="2" height="4" fill="#D0D0D0"/>
<rect x="384" y="17.500" width="27" height="1.500" fill="#D4D4D4"/>
<path d="M386,21 h3 M392,21 h5 M401,21 h3 M407,21 h2" stroke="#6E6E6E" stroke-width="1.100"/>
<path d="M386,23.8 h3 M392,23.8 h5 M401,23.8 h3 M407,23.8 h2" stroke="#6E6E6E" stroke-width="1.100"/>
<path d="M386,26.6 h3 M392,26.6 h5 M401,26.6 h3 M407,26.6 h2" stroke="#6E6E6E" stroke-width="1.100"/>
<path d="M386,29.4 h3 M392,29.4 h5 M401,29.4 h3 M407,29.4 h2" stroke="#6E6E6E" stroke-width="1.100"/>
</g>
</svg>
</body></html>
